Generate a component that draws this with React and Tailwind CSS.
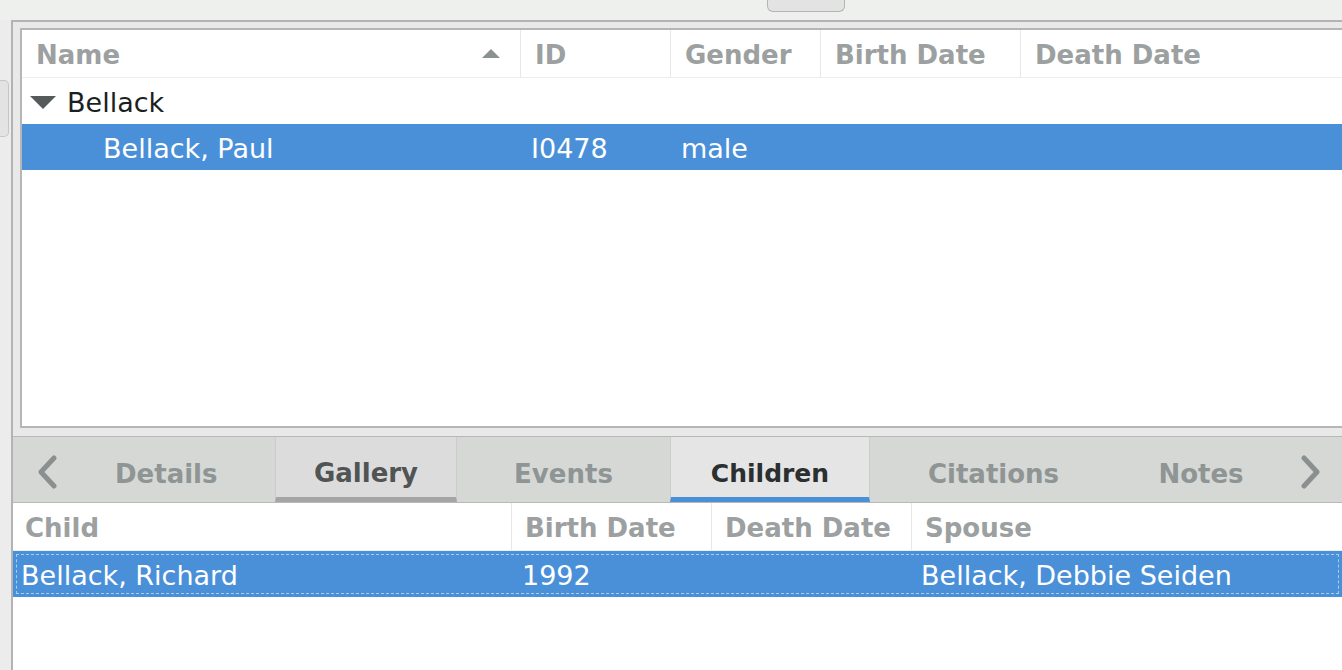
import React from "react";

function Chevron({ dir }) {
  return (
    <svg width="22" height="34" viewBox="0 0 22 34" className="block">
      {dir === "left" ? (
        <polyline points="18,3 5,17 18,31" fill="none" stroke="#8a8f8f" strokeWidth="5" strokeLinecap="round" strokeLinejoin="round" />
      ) : (
        <polyline points="4,3 17,17 4,31" fill="none" stroke="#8a8f8f" strokeWidth="5" strokeLinecap="round" strokeLinejoin="round" />
      )}
    </svg>
  );
}

export default function App() {
  return (
    <div className="w-[1342px] h-[670px] overflow-hidden flex flex-col bg-white font-['DejaVu_Sans',sans-serif] text-[26px] leading-none">
      {/* top strip */}
      <div className="h-[20px] shrink-0 bg-[#edf0ec] flex pl-[767px]">
        <div className="w-[78px] h-[12px] rounded-b-[6px] border border-t-0 border-[#b4b4b4] bg-[#e2e3e2]" />
      </div>

      <div className="flex flex-1 min-h-0">
        {/* left strip */}
        <div className="w-[11px] shrink-0 bg-[#ececec] flex flex-col">
          <div className="mt-[60px] h-[57px] w-[9px] rounded-r-[5px] border border-l-0 border-[#c6c6c6] bg-[#e3e3e3]" />
        </div>

        {/* main */}
        <div className="flex-1 min-w-0 flex flex-col border-l-2 border-[#b3b3b3]">
          {/* top pane */}
          <div className="h-[416px] shrink-0 border-t-2 border-[#b3b3b3] bg-[#e9e9e9] pt-[6px] pl-[7px] pb-[8px] flex flex-col">
            <div className="flex-1 border-2 border-r-0 border-[#b6b6b6] bg-white flex flex-col">
              {/* header */}
              <div className="h-[48px] shrink-0 border-b border-[#ededed] grid grid-cols-[499px_150px_150px_200px_1fr] font-bold text-[#9ca0a0]">
                <div className="border-r border-[#e8e8e8] flex items-center pl-[14px] pr-[20px] pt-[2px] justify-between">
                  <span>Name</span>
                  <svg width="18" height="9" viewBox="0 0 18 9" className="block mb-[2px]">
                    <polygon points="0,9 18,9 9,0" fill="#8c9191" />
                  </svg>
                </div>
                <div className="border-r border-[#e8e8e8] flex items-center pl-[14px] pt-[2px]">ID</div>
                <div className="border-r border-[#e8e8e8] flex items-center pl-[14px] pt-[2px]">Gender</div>
                <div className="border-r border-[#e8e8e8] flex items-center pl-[14px] pt-[2px]">Birth Date</div>
                <div className="flex items-center pl-[14px] pt-[2px]">Death Date</div>
              </div>
              {/* group row */}
              <div className="h-[46px] shrink-0 flex items-center pl-[8px] text-[#1c1f1f] text-[27px]">
                <svg width="26" height="13" viewBox="0 0 26 13" className="block mr-[11px] mt-[2px]">
                  <polygon points="0,0 26,0 13,13" fill="#555a5a" />
                </svg>
                <span className="pt-[3px]">Bellack</span>
              </div>
              {/* selected row */}
              <div className="h-[46px] shrink-0 bg-[#4a90d9] text-white text-[27px] grid grid-cols-[499px_150px_150px_200px_1fr]">
                <div className="flex items-center pl-[81px] pt-[3px]">Bellack, Paul</div>
                <div className="flex items-center pl-[10px] pt-[3px]">I0478</div>
                <div className="flex items-center pl-[10px] pt-[3px]">male</div>
                <div />
                <div />
              </div>
            </div>
          </div>

          {/* tab bar */}
          <div className="h-[67px] shrink-0 border-t border-b border-[#b8b8b8] bg-[#d5d8d5] flex font-bold">
            <div className="w-[62px] shrink-0 flex items-center pl-[23px] pt-[4px]">
              <Chevron dir="left" />
            </div>
            <div className="w-[200px] shrink-0 flex items-center pl-[40px] pt-[8px] text-[#8f9494]">Details</div>
            <div className="w-[182px] shrink-0 flex items-center justify-center pt-[12px] border-l border-r border-[#cbcdcb] bg-[#dcdcdc] border-b-[5px] border-b-[#a5a5a5] text-[#505455]">Gallery</div>
            <div className="w-[213px] shrink-0 flex items-center justify-center pt-[8px] text-[#8f9494]">Events</div>
            <div className="w-[200px] shrink-0 flex items-center justify-center pt-[12px] border-l border-r border-[#cbcdcb] bg-[#e5e5e5] border-b-[5px] border-b-[#4a90d9] text-[#2a2f30] text-[25px]">Children</div>
            <div className="w-[247px] shrink-0 flex items-center justify-center pt-[8px] text-[#8f9494]">Citations</div>
            <div className="w-[168px] shrink-0 flex items-center justify-center pt-[8px] text-[#8f9494]">Notes</div>
            <div className="flex-1 flex items-center pl-[15px] pt-[4px]">
              <Chevron dir="right" />
            </div>
          </div>

          {/* bottom list */}
          <div className="flex-1 bg-white flex flex-col">
            <div className="h-[48px] shrink-0 border-b border-[#ededed] grid grid-cols-[499px_200px_200px_1fr] font-bold text-[#9ca0a0]">
              <div className="border-r border-[#e8e8e8] flex items-center pl-[12px] pt-[3px]">Child</div>
              <div className="border-r border-[#e8e8e8] flex items-center pl-[13px] pt-[3px]">Birth Date</div>
              <div className="border-r border-[#e8e8e8] flex items-center pl-[13px] pt-[3px]">Death Date</div>
              <div className="flex items-center pl-[13px] pt-[3px]">Spouse</div>
            </div>
            <div className="h-[46px] shrink-0 bg-[#4a90d9] p-[3px] text-white text-[27px]">
              <div className="h-full border border-dashed border-[#a9ccf0] grid grid-cols-[495px_200px_200px_1fr]">
                <div className="flex items-center pl-[4px] pt-[3px]">Bellack, Richard</div>
                <div className="flex items-center pl-[10px] pt-[3px]">1992</div>
                <div />
                <div className="flex items-center pl-[9px] pt-[3px]">Bellack, Debbie Seiden</div>
              </div>
            </div>
          </div>
        </div>
      </div>
    </div>
  );
}
